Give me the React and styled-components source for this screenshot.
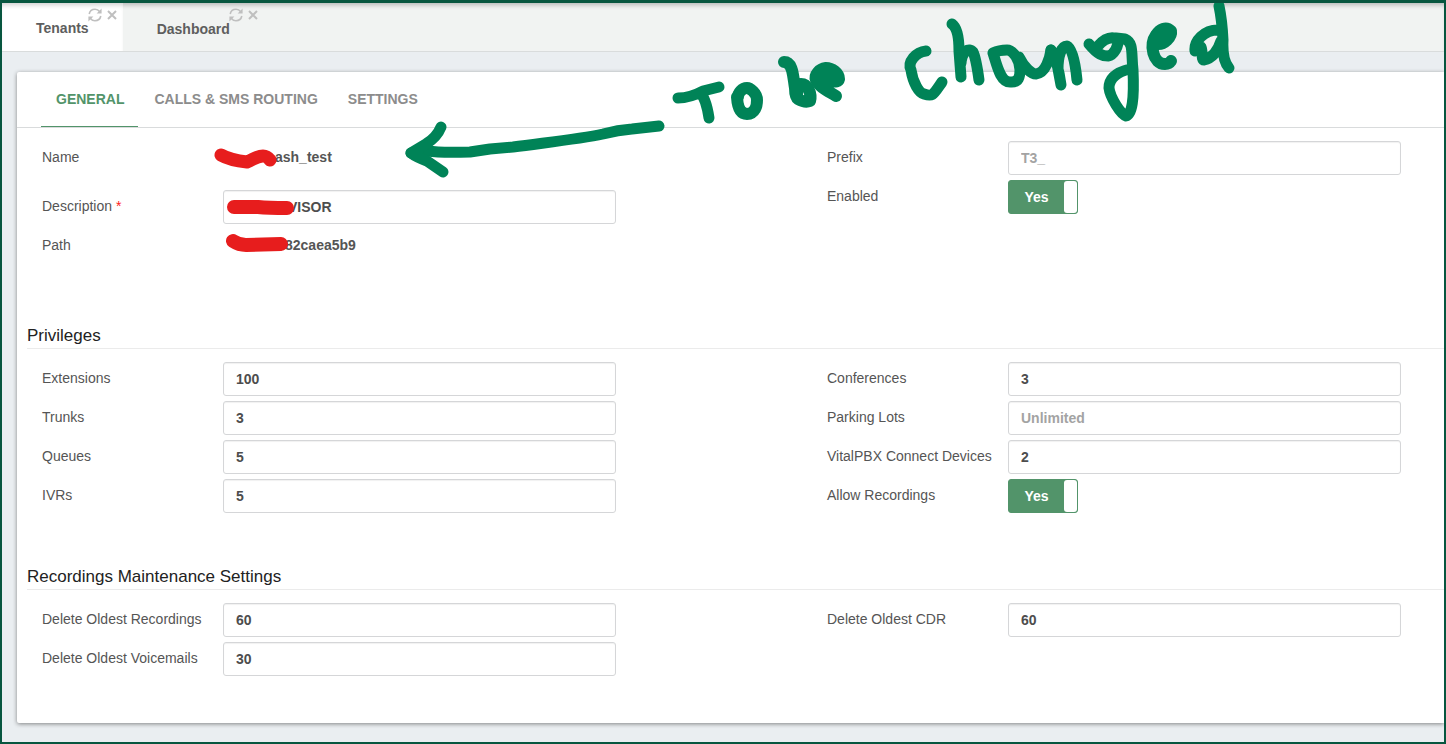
import React, { useState } from 'react'
import styled, { createGlobalStyle } from 'styled-components'

const windowTabs = ['Tenants', 'Dashboard']
const formTabs = ['General', 'Calls & SMS Routing', 'Settings']

const reload = (
  <svg width='14' height='14' viewBox='0 0 14 14' fill='none' stroke='currentColor' strokeWidth='1.6'>
    <path d='M1.2 6 C1.8 3 4.2 1.3 7 1.3 C9 1.3 10.6 2.2 11.8 3.8 M12.8 8 C12.2 11 9.8 12.7 7 12.7 C5 12.7 3.4 11.8 2.2 10.2' />
    <path d='M13.6 .6 V5.6 H8.6 Z M.4 13.4 V8.4 H5.4 Z' fill='currentColor' stroke='none' />
  </svg>
)

const close = (
  <svg width='10' height='10' viewBox='0 0 10 10' fill='none' stroke='currentColor' strokeWidth='2'>
    <path d='M1 1 L9 9 M9 1 L1 9' />
  </svg>
)

function TextField({ id, label, value, placeholder, required, indent }) {
  return (
    <Field>
      <Label htmlFor={id}>{label}{required && <Star> *</Star>}</Label>
      <Input id={id} type='text' defaultValue={value} placeholder={placeholder} $indent={indent} />
    </Field>
  )
}

function SwitchField({ id, label }) {
  const [on, setOn] = useState(true)

  return (
    <Field>
      <Label htmlFor={id}>{label}</Label>
      <Switch $on={on}>
        <input id={id} type='checkbox' checked={on} onChange={() => setOn(!on)} />
        <span>{on ? 'Yes' : 'No'}</span>
        <i />
      </Switch>
    </Field>
  )
}

function Markup() {
  return (
    <Overlay width='1240' height='260' viewBox='0 0 1240 260' aria-hidden='true'>
      <g stroke='#e71d1d' strokeWidth='14'>
        <path d='M221 155 C228 159 238 161 247 162 C254 159 257 156 263 156 Q267 156 270 160' strokeWidth='13' />
        <path d='M234 207 H258 Q268 208 287 208' />
        <path d='M233 241 Q239 245 246 245 L281 244' />
      </g>
      <g stroke='#008357' strokeWidth='11'>
        <path d='M659 126 L632 129 Q618 130 603 134 C580 139 550 142 513 147 L490 149 L470 152 Q440 153 428 151 L411 153' />
        <path d='M441 127 Q437 137 426 144 L411 153 Q416 157 427 161 L443 172' />
        <path d='M678 98 Q690 98 703 91 L719 87 M700 93 Q706 98 709 118' />
        <path d='M737 97 Q738 114 747 114 C755 114 757 106 757 100 C757 93 750 88 747 88 C742 88 738 93 738 97' strokeWidth='12' />
        <path d='M784 62 C793 62 793 76 795 88 Q795 97 798 99 Q805 103 810 101 C812 94 808 84 801 84 Q798 84 797 94' strokeWidth='12' />
        <path d='M820 77 C826 81 838 84 839 79 C839 73 832 68 826 68 C819 69 814 75 816 80 C819 87 828 91 836 96' strokeWidth='12' />
        <path d='M926 51 C916 52 907 62 911 70 C913 83 919 93 924 94 C933 97 933 95 942 82' />
        <path d='M952 24 Q959 29 959 51 L961 77 M961 63 C962 51 969 47 973 52 Q976 58 979 80' />
        <path d='M993 53 C997 65 1000 82 1010 82 C1019 83 1020 76 1020 70 C1020 60 1013 50 1007 50 Q999 50 993 53 M1019 57 C1024 67 1031 74 1036 74 C1046 73 1050 57 1051 50' />
        <path d='M1051 50 Q1058 62 1061 85 L1058 69 C1058 57 1061 46 1067 46 Q1074 49 1077 80' />
        <path d='M1089 44 C1098 55 1103 56 1108 56 C1114 55 1119 46 1118 39 C1111 36 1104 39 1098 46 M1116 38 L1125 39 C1134 43 1131 53 1133 70 Q1135 114 1126 116 C1121 115 1110 97 1109 88 Q1109 74 1130 69' />
        <path d='M1157 44 C1164 45 1172 37 1171 31 C1166 26 1160 29 1156 35 C1149 45 1153 64 1165 64 Q1169 64 1171 61' strokeWidth='12' />
        <path d='M1219 6 Q1222 20 1223 40 Q1222 60 1229 68 M1218 30 C1204 30 1194 41 1195 51 L1201 47 C1203 51 1201 60 1204 60 Q1216 57 1221 41' />
      </g>
    </Overlay>
  )
}

function App() {
  const [active, setActive] = useState('General')

  return (
    <>
      <GlobalStyle />
      <Page>
        <WindowBar>
          {windowTabs.map((tab, i) => (
            <WindowTab key={tab} $active={i === 0}>
              <a href={'#' + tab.toLowerCase()}>{tab}</a>
              <TabTools>
                <button type='button' aria-label='Reload'>{reload}</button>
                <button type='button' aria-label='Close'>{close}</button>
              </TabTools>
            </WindowTab>
          ))}
        </WindowBar>
        <Panel>
          <FormTabs>
            {formTabs.map((tab) => (
              <FormTab key={tab} type='button' $active={tab === active} onClick={() => setActive(tab)}>{tab}</FormTab>
            ))}
          </FormTabs>
          <Columns>
            <Column>
              <Field $tall>
                <Label as='span'>Name</Label>
                <Value $indent={52}>ash_test</Value>
              </Field>
              <TextField id='description' label='Description' value='VISOR' required indent={64} />
              <Field>
                <Label as='span'>Path</Label>
                <Value $indent={62}>82caea5b9</Value>
              </Field>
            </Column>
            <Column>
              <TextField id='prefix' label='Prefix' placeholder='T3_' />
              <SwitchField id='enabled' label='Enabled' />
            </Column>
          </Columns>
          <Heading $first>Privileges</Heading>
          <Columns>
            <Column>
              <TextField id='extensions' label='Extensions' value='100' />
              <TextField id='trunks' label='Trunks' value='3' />
              <TextField id='queues' label='Queues' value='5' />
              <TextField id='ivrs' label='IVRs' value='5' />
            </Column>
            <Column>
              <TextField id='conferences' label='Conferences' value='3' />
              <TextField id='parking' label='Parking Lots' placeholder='Unlimited' />
              <TextField id='devices' label='VitalPBX Connect Devices' value='2' />
              <SwitchField id='recordings' label='Allow Recordings' />
            </Column>
          </Columns>
          <Heading>Recordings Maintenance Settings</Heading>
          <Columns>
            <Column>
              <TextField id='oldRecordings' label='Delete Oldest Recordings' value='60' />
              <TextField id='oldVoicemails' label='Delete Oldest Voicemails' value='30' />
            </Column>
            <Column>
              <TextField id='oldCdr' label='Delete Oldest CDR' value='60' />
            </Column>
          </Columns>
        </Panel>
        <Markup />
      </Page>
    </>
  )
}

const GlobalStyle = createGlobalStyle`
    *{
        box-sizing: border-box;
    }
    body{
        margin: 0;
        font-family: "Liberation Sans", Arial, sans-serif;
        font-size: 14px;
        color: #555;
    }
    button, input{
        font: inherit;
    }
    button{
        padding: 0;
        border: 0;
        background: none;
        cursor: pointer;
    }
`;

const Page = styled.div`
    position: relative;
    min-height: 100vh;
    padding-bottom: 19px;
    border: 2px solid #07563f;
    border-top-width: 3px;
    background: #eaeef1;
    overflow: hidden;
`;

const WindowBar = styled.nav`
    display: flex;
    height: 49px;
    background: #f1f3f2;
    border-bottom: 1px solid #d9dcdc;
    box-shadow: inset 0 5px 5px -3px rgba(0, 0, 0, 0.25);
`;

const WindowTab = styled.div`
    position: relative;
    padding: 0 34px;
    line-height: ${({ $active }) => $active ? '50px' : '52px'};
    background: ${({ $active }) => $active ? '#fff' : 'transparent'};
    box-shadow: ${({ $active }) => $active ? 'inset 0 5px 5px -3px rgba(0, 0, 0, 0.2)' : 'none'};
    a{
        color: #5e5e5e;
        font-weight: 700;
        text-decoration: none;
    }
`;

const TabTools = styled.div`
    position: absolute;
    top: 5px;
    right: 6px;
    display: flex;
    align-items: center;
    gap: 5px;
    button{
        display: flex;
        color: #bfbfbf;
    }
`;

const Panel = styled.main`
    margin: 20px 0 0 15px;
    padding-bottom: 47px;
    background: #fff;
    border-radius: 2px 0 0 2px;
    box-shadow: 0 1px 4px rgba(0, 0, 0, 0.45);
`;

const FormTabs = styled.div`
    display: flex;
    gap: 1px;
    height: 56px;
    padding-left: 24px;
    border-bottom: 1px solid #d9dbdc;
`;

const FormTab = styled.button`
    padding: 0 14px 0 15px;
    color: ${({ $active }) => $active ? '#52946a' : '#8c8c8c'};
    font-weight: 700;
    text-transform: uppercase;
    border-bottom: 1px solid ${({ $active }) => $active ? '#52946a' : 'transparent'};
`;

const Columns = styled.div`
    display: grid;
    grid-template-columns: 1fr 1fr;
    column-gap: 211px;
    padding: 13px 43px 0 25px;
`;

const Column = styled.div`
    display: flex;
    flex-direction: column;
    gap: 5px;
`;

const Field = styled.div`
    display: grid;
    grid-template-columns: 181px 1fr;
    align-items: start;
    min-height: ${({ $tall }) => $tall ? '44px' : '34px'};
`;

const Label = styled.label`
    line-height: 33px;
    white-space: nowrap;
`;

const Star = styled.span`
    color: #f22;
`;

const Value = styled.span`
    padding-left: ${({ $indent }) => $indent}px;
    line-height: 33px;
    color: #555;
    font-weight: 700;
`;

const Input = styled.input`
    width: 100%;
    height: 34px;
    padding: 0 12px;
    padding-left: ${({ $indent = 12 }) => $indent}px;
    color: #4d4d4d;
    font-weight: 700;
    background: #fff;
    border: 1px solid #d5d6d8;
    border-radius: 3px;
    box-shadow: inset 0 1px 1px rgba(0, 0, 0, 0.06);
    &::placeholder{
        color: #a3a3a3;
        opacity: 1;
    }
`;

const Switch = styled.label`
    display: flex;
    width: 70px;
    height: 34px;
    flex-direction: ${({ $on }) => $on ? 'row' : 'row-reverse'};
    background: ${({ $on }) => $on ? '#52946a' : '#999'};
    border: 1px solid ${({ $on }) => $on ? '#52946a' : '#999'};
    border-radius: 3px;
    color: #fff;
    font-weight: 700;
    line-height: 32px;
    text-align: center;
    cursor: pointer;
    input{
        position: absolute;
        opacity: 0;
    }
    span{
        flex: 1;
    }
    i{
        width: 13px;
        background: #fff;
        border-radius: 3px;
    }
`;

const Heading = styled.h2`
    margin: ${({ $first }) => $first ? '61px' : '52px'} 0 0 10px;
    color: #222;
    font-size: 17px;
    font-weight: 400;
    line-height: 24px;
    border-bottom: 1px solid #ebebeb;
`;

const Overlay = styled.svg`
    position: absolute;
    top: -3px;
    left: -2px;
    pointer-events: none;
    fill: none;
    stroke-linecap: round;
    stroke-linejoin: round;
`;

export default App
